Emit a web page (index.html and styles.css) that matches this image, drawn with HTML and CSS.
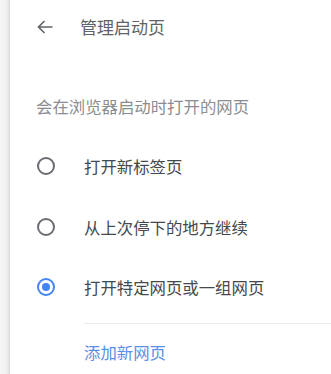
FILE: index.html
```html
<!DOCTYPE html>
<html lang="zh-CN">
  <head>
    <meta charset="utf-8">
    <title>管理启动页</title>
    <link rel="stylesheet" href="styles.css">
  </head>
  <body>
    <div class="page">
      <div class="page__edge"></div>
      <div class="panel">
        <div class="panel__header">
          <svg class="panel__back" width="16" height="14" viewBox="0 0 16 14">
            <path d="M15.5 7H1.5M7.5 1L1.5 7L7.5 13" fill="none" stroke="#5f6368" stroke-width="1.6"/>
          </svg>
          <span class="panel__title">管理启动页</span>
        </div>
        <div class="panel__hint">会在浏览器启动时打开的网页</div>
        <div class="options">
          <div class="option">
            <span class="radio"></span>
            <span class="option__label">打开新标签页</span>
          </div>
          <div class="option">
            <span class="radio"></span>
            <span class="option__label">从上次停下的地方继续</span>
          </div>
          <div class="option">
            <span class="radio radio--on"></span>
            <span class="option__label">打开特定网页或一组网页</span>
          </div>
        </div>
        <div class="panel__rule"></div>
        <div class="panel__link">添加新网页</div>
      </div>
    </div>
  </body>
</html>
```
FILE: styles.css
```css
*, *::after, *::before {
  margin: 0;
  padding: 0;
  box-sizing: border-box;
}
body {
  width: 100%;
  height: 100vh;
  background-color: #fff;
  font-family: "Noto Sans CJK SC", "Noto Sans", sans-serif;
}
.page {
  display: flex;
  height: 100vh;
}
.page__edge {
  width: 10px;
  background-image: linear-gradient(90deg, #f6f6f6 0%, #f0f0f0 70%, #e2e2e2 100%);
  border-right: 1px solid #dcdcdc;
}
.panel {
  flex: 1;
  padding-left: 26px;
}
.panel__header {
  display: flex;
  align-items: center;
  height: 54px;
}
.panel__back {
  display: block;
  margin-left: 1px;
}
.panel__title {
  margin-left: 27px;
  font-size: 17px;
  line-height: 24px;
  color: #5f6368;
}
.panel__hint {
  margin-top: 40px;
  font-size: 16.4px;
  line-height: 24px;
  color: #8a8d91;
}
.options {
  margin-top: 18px;
}
.option {
  display: flex;
  align-items: center;
  height: 60.5px;
}
.radio {
  width: 18px;
  height: 18px;
  margin-left: 1px;
  border: 2px solid #6a6d71;
  border-radius: 50%;
  position: relative;
}
.radio--on {
  border-color: #4285f4;
}
.radio--on::before {
  content: '';
  position: absolute;
  left: 3px;
  top: 3px;
  width: 8px;
  height: 8px;
  border-radius: 50%;
  background-color: #4285f4;
}
.option__label {
  margin-left: 29px;
  font-size: 16.4px;
  line-height: 24px;
  color: #45484c;
}
.panel__rule {
  margin-top: 5px;
  margin-left: 48px;
  height: 1px;
  background-color: #ececec;
}
.panel__link {
  margin-top: 16px;
  margin-left: 48px;
  font-size: 16.4px;
  line-height: 24px;
  color: #5b8ee6;
}
```
